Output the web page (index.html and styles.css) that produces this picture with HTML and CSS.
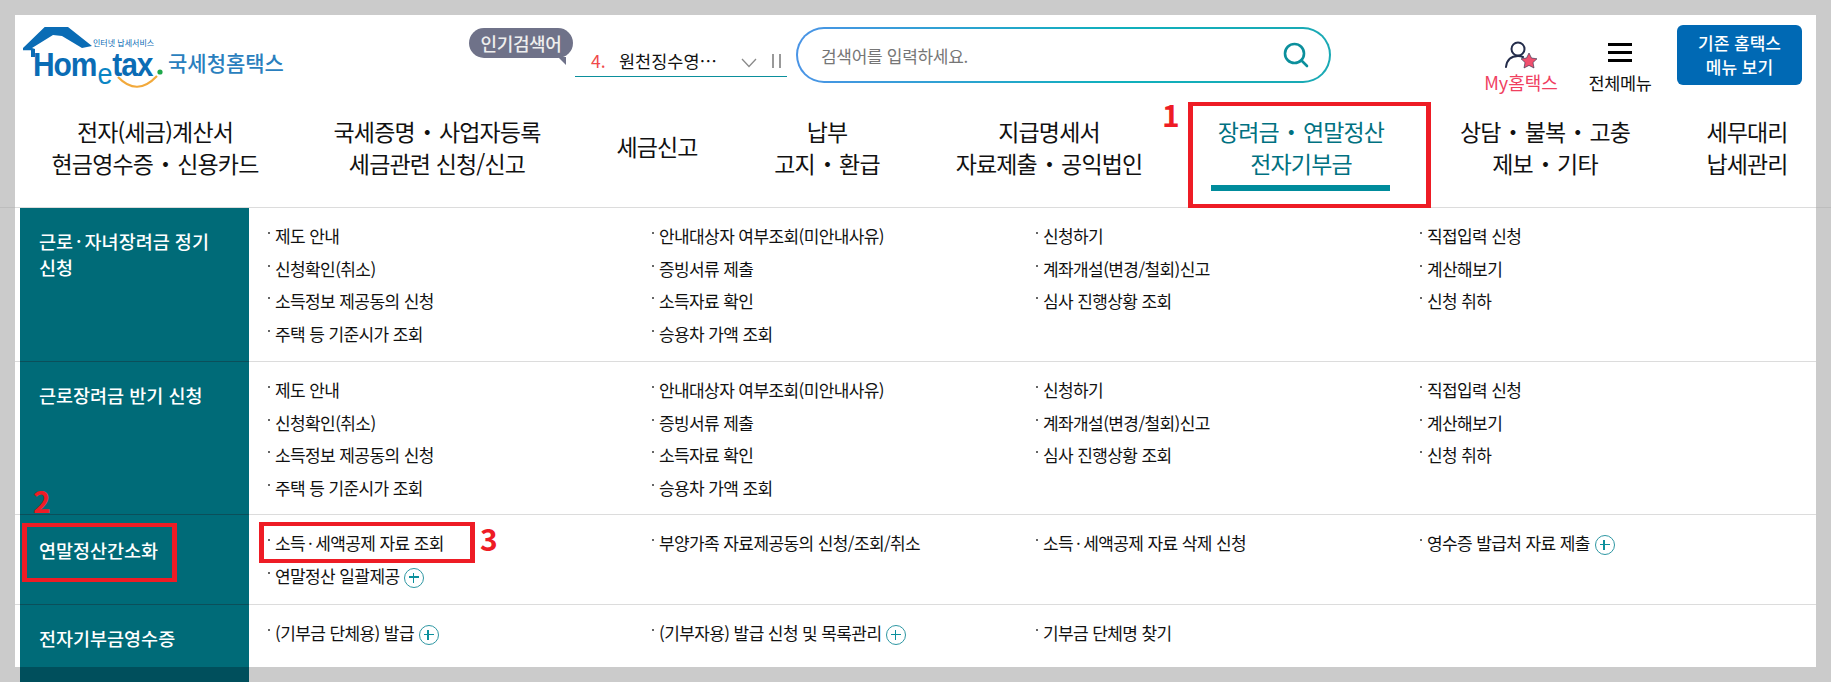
FILE: index.html
```html
<!DOCTYPE html>
<html lang="ko">
<head>
<meta charset="utf-8">
<title>국세청홈택스</title>
<link rel="stylesheet" href="styles.css">
</head>
<body>
<div class="page">
  <header class="top">
    <a class="logo">
      <svg class="logo-mark" width="145" height="64" viewBox="0 0 145 64">
        <path d="M1 21 L22.700 0 L46 0 L70 19 L60 21 L40 9 L31 8 L10 21 L13 22 L13 30 L9 30 L9 23.300 L1 23.300 Z" fill="#0a6cb5"/>
        <path d="M96 50 Q115 70 135 49" fill="none" stroke="#f2a93b" stroke-width="2.200"/>
        <circle cx="138" cy="45" r="2.600" fill="#1fa84a"/>
      </svg>
      <span class="logo-small">인터넷 납세서비스</span>
      <span class="logo-word">Hom<i>e</i>tax</span>
      <span class="logo-name">국세청홈택스</span>
    </a>
    <div class="popular">
      <span class="bubble">인기검색어</span>
      <div class="rank"><b>4.</b><span class="rank-text">원천징수영…</span>
        <svg width="16" height="10" viewBox="0 0 16 10"><path d="M1 1 L8 8.500 L15 1" fill="none" stroke="#8a8a8a" stroke-width="1.300"/></svg>
        <span class="pause"></span>
      </div>
    </div>
    <div class="search"><div class="search-in"><span>검색어를 입력하세요.</span>
      <svg width="28" height="28" viewBox="0 0 28 28"><circle cx="12.500" cy="12.500" r="9.500" fill="none" stroke="#0b8f9c" stroke-width="2.600"/><path d="M19.500 19.500 L25 25" stroke="#0b8f9c" stroke-width="2.600" stroke-linecap="round"/></svg>
    </div></div>
    <div class="tools">
      <div class="tool my">
        <svg width="34" height="30" viewBox="0 0 34 30"><circle cx="14" cy="9" r="6.500" fill="none" stroke="#232c4a" stroke-width="2"/><path d="M2 27 C3 19 8 16 14 16 C16 16 18 16.500 19 17" fill="none" stroke="#232c4a" stroke-width="2" stroke-linecap="round"/><path d="M25 13 L27.500 18 L33 18.800 L29 22.500 L30 28 L25 25.400 L20 28 L21 22.500 L17 18.800 L22.500 18 Z" fill="#f0506e" stroke="#232c4a" stroke-width=".6"/></svg>
        <span>My홈택스</span>
      </div>
      <div class="tool menu-tool">
        <div class="burger"><i></i><i></i><i></i></div>
        <span>전체메뉴</span>
      </div>
      <a class="old-btn">기존 홈택스<br>메뉴 보기</a>
    </div>
  </header>
  <nav class="gnb">
    <a class="g1">전자(세금)계산서<br>현금영수증<span class="dot">・</span>신용카드</a>
    <a class="g2">국세증명<span class="dot">・</span>사업자등록<br>세금관련 신청/신고</a>
    <a class="g3">세금신고</a>
    <a class="g4">납부<br>고지<span class="dot">・</span>환급</a>
    <a class="g5">지급명세서<br>자료제출<span class="dot">・</span>공익법인</a>
    <a class="g6 on">장려금<span class="dot">・</span>연말정산<br>전자기부금<span class="num n1">1</span></a>
    <a class="g7">상담<span class="dot">・</span>불복<span class="dot">・</span>고충<br>제보<span class="dot">・</span>기타</a>
    <a class="g8">세무대리<br>납세관리</a>
  </nav>
  <main class="menu">
    <section class="row r1">
      <h3>근로<span class="mid">·</span>자녀장려금 정기<br>신청</h3>
      <ul>
        <li>제도 안내</li><li>안내대상자 여부조회(미안내사유)</li><li>신청하기</li><li>직접입력 신청</li>
        <li>신청확인(취소)</li><li>증빙서류 제출</li><li>계좌개설(변경/철회)신고</li><li>계산해보기</li>
        <li>소득정보 제공동의 신청</li><li>소득자료 확인</li><li>심사 진행상황 조회</li><li>신청 취하</li>
        <li>주택 등 기준시가 조회</li><li>승용차 가액 조회</li>
      </ul>
    </section>
    <section class="row r2">
      <h3>근로장려금 반기 신청</h3>
      <ul>
        <li>제도 안내</li><li>안내대상자 여부조회(미안내사유)</li><li>신청하기</li><li>직접입력 신청</li>
        <li>신청확인(취소)</li><li>증빙서류 제출</li><li>계좌개설(변경/철회)신고</li><li>계산해보기</li>
        <li>소득정보 제공동의 신청</li><li>소득자료 확인</li><li>심사 진행상황 조회</li><li>신청 취하</li>
        <li>주택 등 기준시가 조회</li><li>승용차 가액 조회</li>
      </ul>
    </section>
    <section class="row r3">
      <h3>연말정산간소화<span class="mark m2"></span><span class="num n2">2</span></h3>
      <ul>
        <li>소득<span class="mid">·</span>세액공제 자료 조회<span class="mark m3"></span><span class="num n3">3</span></li><li>부양가족 자료제공동의 신청/조회/취소</li><li>소득<span class="mid">·</span>세액공제 자료 삭제 신청</li><li>영수증 발급처 자료 제출<i class="plus"></i></li>
        <li>연말정산 일괄제공<i class="plus"></i></li>
      </ul>
    </section>
    <section class="row r4">
      <h3>전자기부금영수증</h3>
      <ul>
        <li>(기부금 단체용) 발급<i class="plus"></i></li><li>(기부자용) 발급 신청 및 목록관리<i class="plus"></i></li><li>기부금 단체명 찾기</li>
      </ul>
    </section>
  </main>
  <div class="tail"></div>
</div>
</body>
</html>
```
FILE: styles.css
```css
* { box-sizing: border-box; }
html, body { margin: 0; height: 682px; overflow: hidden; }
body { background: #cbcbcb; font-family: "Noto Sans CJK KR", "Noto Sans", sans-serif; color: #111; }
ul, h3 { margin: 0; padding: 0; list-style: none; }
.page { margin: 15px 15px 0; width: 1801px; background: #fff; height: 652px; position: relative; }
.top { height: 85px; position: relative; display: flex; }
.logo { width: 455px; position: relative; display: block; }
.logo-mark { position: absolute; left: 7px; top: 12px; }
.logo-small { position: absolute; left: 78px; top: 22px; font-size: 8px; line-height: 12px; color: #0a6cb5; }
.logo-word { position: absolute; left: 18px; top: 30px; font: bold 30px/40px "Liberation Sans", sans-serif; letter-spacing: -1.100px; color: #0a6cb5; transform: scaleY(1.1); }
.logo-word i { font-style: normal; font-weight: 400; font-size: 27px; position: relative; top: 7px; color: #0a85c4; margin: 0 1px; }
.logo-name { position: absolute; left: 153px; top: 33px; font-size: 21px; line-height: 28px; font-weight: 500; color: #2a7fbe; }
.popular { width: 220px; position: relative; }
.bubble { position: absolute; left: -1px; top: 13px; width: 104px; height: 30px; border-radius: 15px; background: #6f7289; color: #eee; font-size: 18px; line-height: 30px; text-align: center; font-weight: 500; letter-spacing: -0.400px; }
.bubble::after { content: ""; position: absolute; right: 7px; bottom: -7px; border-left: 8px solid transparent; border-top: 8px solid #6f7289; }
.rank { position: absolute; left: 105px; top: 30px; width: 212px; height: 32px; border-bottom: 1px solid #0b8f9c; display: flex; align-items: center; padding-left: 16px; font-size: 17.500px; }
.rank b { color: #f04a4a; font-weight: 400; width: 28px; flex: none; }
.rank-text { width: 122px; flex: none; }
.rank svg { flex: none; margin-top: 4px; }
.pause { width: 9px; height: 14px; margin-left: 15px; border-left: 2.500px solid #999; border-right: 2.500px solid #999; }
.search { position: absolute; left: 781px; top: 12px; width: 535px; height: 56px; border-radius: 28px; padding: 2px; background: linear-gradient(90deg, #4a94e6, #0fb0bc 60%, #1aa9b4); }
.search-in { height: 52px; border-radius: 26px; background: #fff; display: flex; align-items: center; justify-content: space-between; padding: 0 19px 0 23px; font-size: 17px; color: #767676; letter-spacing: -0.300px; }
.tools { position: absolute; left: 1460px; top: 0; width: 341px; height: 85px; }
.tool { position: absolute; top: 25px; width: 110px; display: flex; flex-direction: column; align-items: center; font-size: 17.500px; line-height: 20px; }
.tool.my { left: -9px; color: #f0405f; font-size: 18px; }
.tool.my svg { height: 30px; margin-bottom: 2px; }
.menu-tool { left: 100px; width: 90px; letter-spacing: -0.300px; }
.burger { height: 33px; padding-top: 3px; }
.burger i { display: block; width: 24px; height: 3px; background: #000; margin-bottom: 5px; }
.old-btn { position: absolute; left: 202px; top: 10px; width: 125px; height: 60px; border-radius: 6px; background: #0069b4; color: #fff; font-size: 17px; line-height: 24px; font-weight: 500; text-align: center; padding-top: 6px; }
.gnb { height: 108px; position: relative; display: flex; padding-left: 9px; font-size: 23px; line-height: 32px; letter-spacing: -0.850px; border-bottom: 1px solid #dcdcdc; text-align: center; }
.gnb::before, .gnb::after { content: ""; position: absolute; bottom: -1px; width: 15px; height: 1px; background: #bdbdbd; }
.gnb::before { left: -15px; }
.gnb::after { right: -15px; }
.gnb a { height: 107px; padding-top: 15px; flex: none; position: relative; white-space: nowrap; }
.dot { margin: 0 1px; }
.mid { margin: 0 3px; }
.g1 { width: 262px; } .g2 { width: 302px; } .g3 { width: 138px; padding-top: 30px !important; }
.g4 { width: 202px; } .g5 { width: 242px; }
.g6 { width: 262px; color: #007181; }
.g7 { width: 226px; } .g8 { width: 116px; margin-left: 31px; }
.g6.on::before { content: ""; position: absolute; left: 41px; width: 179px; top: 85px; height: 6px; background: #008c9c; }
.g6.on::after { content: ""; position: absolute; left: 18px; top: 2px; width: 233px; height: 98px; border: solid #ee1c25; border-width: 4px 5px; }
.num { position: absolute; color: #ee1c25; font-weight: 700; font-size: 30px; line-height: 36px; letter-spacing: 0; z-index: 3; }
.n1 { left: -8px; top: -4px; }
.menu { display: block; }
.row { display: flex; border-bottom: 1px solid #dcdcdc; position: relative; }
.row:last-child { border-bottom: 0; }
.r1 { height: 154px; }
.r2 { height: 153px; }
.r3 { height: 90px; }
.r4 { height: 62px; }
.row h3 { width: 229px; margin: 0 0 -1px 5px; background: #006b78; color: #fff; font-size: 18.500px; line-height: 26px; font-weight: 500; padding: 20px 10px 0 19px; border-bottom: 1px solid #0b4f5a; position: relative; }
.r3 h3 { padding-top: 22px; }
.r4 h3 { border-bottom: 0; margin-bottom: 0; }
.row ul { flex: 1; display: grid; grid-template-columns: 384px 384px 384px 1fr; grid-auto-rows: 32.500px; padding: 16px 0 0 19px; align-content: start; font-size: 17px; line-height: 24px; letter-spacing: -0.600px; }
.row li { position: relative; padding-left: 7px; white-space: nowrap; }
.row li::before { content: ""; position: absolute; left: 0; top: 8px; width: 2px; height: 2px; background: #666; }
.plus { display: inline-block; width: 20px; height: 20px; border: 1.500px solid #2e97a3; border-radius: 50%; margin-left: 5px; vertical-align: -5px; position: relative; }
.plus::before, .plus::after { content: ""; position: absolute; background: #0b8f9c; }
.plus::before { left: 4px; right: 4px; top: 7.500px; height: 1.500px; }
.plus::after { top: 4px; bottom: 4px; left: 7.500px; width: 1.500px; }
.mark { position: absolute; border: solid #ee1c25; border-width: 4px 5px; z-index: 2; pointer-events: none; }
.m2 { left: 2px; top: 8px; width: 155px; height: 59px; }
.m3 { left: -9px; top: -9px; width: 216px; height: 41px; }
.n2 { left: 13px; top: -33px; }
.n3 { left: 212px; top: -11px; }
.tail { position: absolute; left: 5px; top: 652px; width: 229px; height: 15px; background: #004f5c; }
```
